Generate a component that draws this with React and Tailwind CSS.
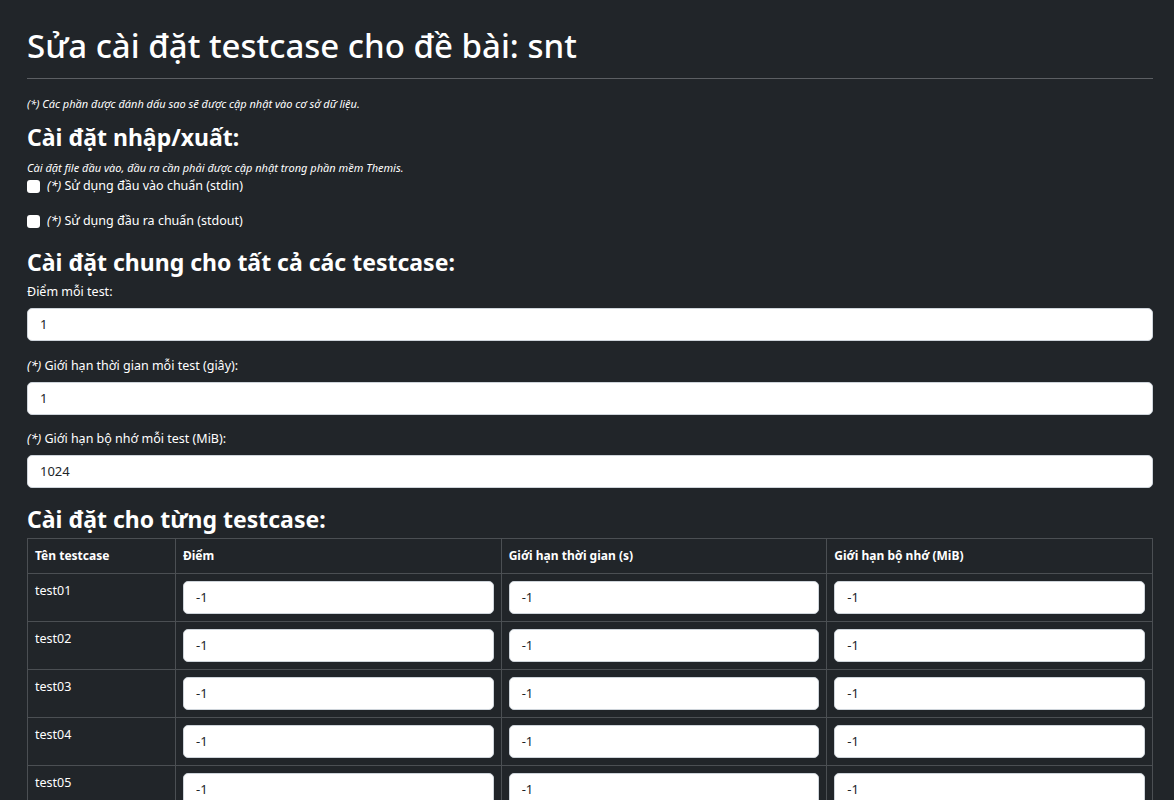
import React from "react";

const F = { fontFamily: '"Noto Sans", "Open Sans", sans-serif' };

function Field({ label, value, star, mb }) {
  return (
    <div className={mb}>
      <div className="text-[12.5px] leading-[20px]">
        {star && <i>(*) </i>}
        {label}
      </div>
      <div className="mt-[6px] h-[33px] bg-white border border-[#ced4da] rounded-[5px] px-[12px] flex items-center text-[13px] text-[#212529]">
        {value}
      </div>
    </div>
  );
}

function CellInput() {
  return (
    <div className="h-[33px] bg-white border border-[#ced4da] rounded-[5px] px-[12px] flex items-center text-[13px] text-[#212529]">
      -1
    </div>
  );
}

export default function App() {
  const rows = ["test01", "test02", "test03", "test04", "test05"];
  return (
    <div className="min-h-screen bg-[#212529] text-white pl-[27px] pr-[21px] pt-[25px] pb-[20px]" style={F}>
      <h1 className="text-[33px] leading-[42px] font-medium">Sửa cài đặt testcase cho đề bài: snt</h1>
      <hr className="mt-[11px] border-0 border-t border-[#5c5f63]" />
      <p className="mt-[17px] text-[11px] leading-[16px] italic">(*) Các phần được đánh dấu sao sẽ được cập nhật vào cơ sở dữ liệu.</p>
      <h3 className="mt-[11px] text-[23px] leading-[29px] font-bold">Cài đặt nhập/xuất:</h3>
      <p className="mt-[8px] text-[11px] leading-[16px] italic">Cài đặt file đầu vào, đầu ra cần phải được cập nhật trong phần mềm Themis.</p>
      <div className="flex items-center gap-[7px] text-[12.5px] leading-[20px] h-[20px]">
        <span className="w-[13px] h-[13px] bg-white rounded-[3px] inline-block" />
        <span><i>(*)</i> Sử dụng đầu vào chuẩn (stdin)</span>
      </div>
      <div className="mt-[15px] flex items-center gap-[7px] text-[12.5px] leading-[20px] h-[20px]">
        <span className="w-[13px] h-[13px] bg-white rounded-[3px] inline-block" />
        <span><i>(*)</i> Sử dụng đầu ra chuẩn (stdout)</span>
      </div>
      <h3 className="mt-[17px] text-[23px] leading-[29px] font-bold">Cài đặt chung cho tất cả các testcase:</h3>
      <div className="mt-[5px]">
        <Field label="Điểm mỗi test:" value="1" mb="mb-[15px]" />
        <Field label="Giới hạn thời gian mỗi test (giây):" value="1" star mb="mb-[14px]" />
        <Field label="Giới hạn bộ nhớ mỗi test (MiB):" value="1024" star mb="mb-[17px]" />
      </div>
      <h3 className="text-[23px] leading-[29px] font-bold">Cài đặt cho từng testcase:</h3>
      <table className="mt-[4px] w-full border-collapse border border-[#4b4f53] table-fixed">
        <colgroup>
          <col style={{ width: "148px" }} />
          <col />
          <col />
          <col />
        </colgroup>
        <thead>
          <tr className="text-[12px] font-bold text-left">
            <th className="border border-[#4b4f53] px-[7px] py-[7px] leading-[20px]">Tên testcase</th>
            <th className="border border-[#4b4f53] px-[7px] py-[7px] leading-[20px]">Điểm</th>
            <th className="border border-[#4b4f53] px-[7px] py-[7px] leading-[20px]">Giới hạn thời gian (s)</th>
            <th className="border border-[#4b4f53] px-[7px] py-[7px] leading-[20px]">Giới hạn bộ nhớ (MiB)</th>
          </tr>
        </thead>
        <tbody>
          {rows.map((r) => (
            <tr key={r}>
              <td className="border border-[#4b4f53] px-[7px] py-[7px] align-top text-[12.5px] leading-[20px]">{r}</td>
              <td className="border border-[#4b4f53] px-[7px] py-[7px]"><CellInput /></td>
              <td className="border border-[#4b4f53] px-[7px] py-[7px]"><CellInput /></td>
              <td className="border border-[#4b4f53] px-[7px] py-[7px]"><CellInput /></td>
            </tr>
          ))}
        </tbody>
      </table>
    </div>
  );
}
